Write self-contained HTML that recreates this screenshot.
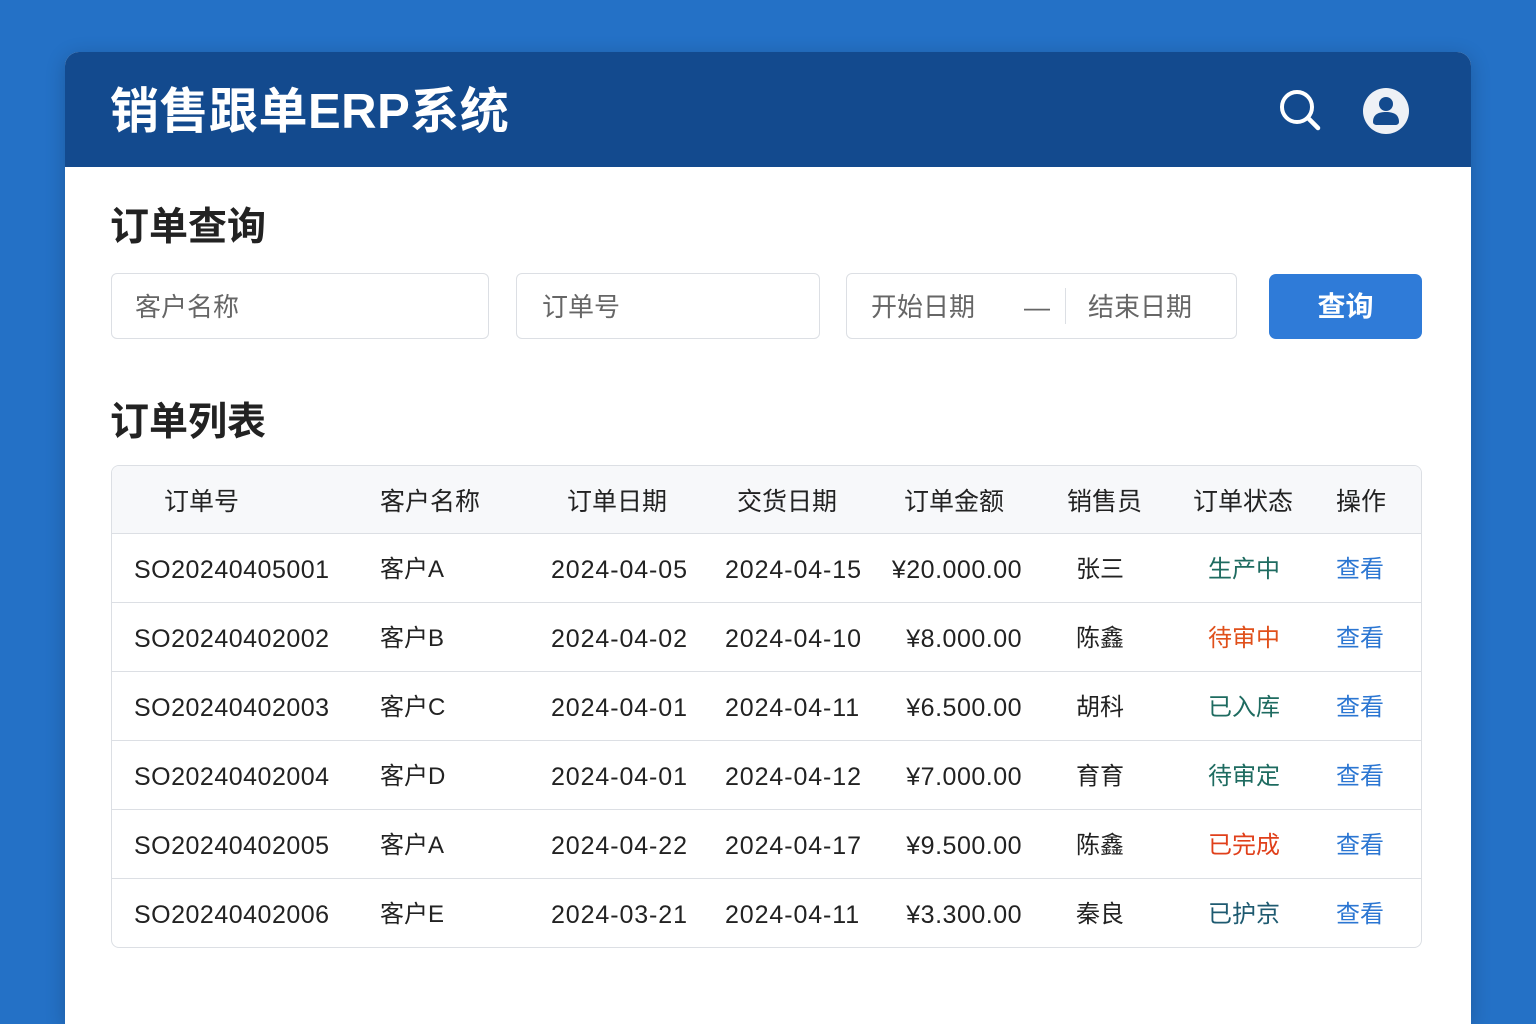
<!DOCTYPE html>
<html><head><meta charset="utf-8"><style>
*{margin:0;padding:0;box-sizing:border-box}
html,body{width:1536px;height:1024px;overflow:hidden}
body{background:#2471c6;font-family:"Liberation Sans","Noto Sans CJK SC",sans-serif;position:relative}
.card{position:absolute;left:65px;top:52px;width:1406px;height:972px;background:#fff;border-radius:14px 14px 0 0;overflow:hidden;box-shadow:0 4px 20px rgba(0,0,0,.2)}
.hd{height:115px;background:#134a8e;position:relative}
.hd h1{position:absolute;left:45px;top:32px;color:#fff;font-size:49px;font-weight:bold;letter-spacing:0.5px;line-height:56px}
.a{position:absolute;white-space:nowrap}
.in{position:absolute;border:1.5px solid #dcdfe4;border-radius:6px;height:66px;top:221px;color:#666;font-size:26px;line-height:66px}
.sec{font-size:39px;font-weight:bold;color:#222;line-height:50px}
.tbl{position:absolute;left:46px;top:413px;width:1311px;height:483px;border:1.5px solid #dcdfe4;border-radius:8px;overflow:hidden}
.th{position:absolute;left:0;top:0;width:100%;height:68px;background:#f7f8fa;border-bottom:1.5px solid #dcdfe4}
.row{position:absolute;left:0;width:100%;height:69px;border-bottom:1.5px solid #dcdfe4}
.c{position:absolute;font-size:24px;color:#222;white-space:nowrap;top:21px;line-height:30px}
.n{font-size:25px;letter-spacing:0.5px}
.d{font-size:25px;letter-spacing:0.9px}
.h{font-size:25px;top:21px}
</style></head><body>
<div class="card">
 <div class="hd"><h1>销售跟单ERP系统</h1>
  <svg class="a" style="left:1213px;top:36px" width="46" height="46" viewBox="0 0 46 46"><circle cx="19" cy="19" r="15" fill="none" stroke="#fff" stroke-width="4"/><line x1="30" y1="30" x2="40" y2="40" stroke="#fff" stroke-width="4.5" stroke-linecap="round"/></svg>
  <svg class="a" style="left:1297px;top:35px" width="48" height="48" viewBox="0 0 48 48"><circle cx="24" cy="24" r="23" fill="#eef1f6"/><circle cx="24" cy="17" r="7" fill="#134a8e"/><path d="M11 35c0-8 6-10 13-10s13 2 13 10c0 2-2 3-4 3H15c-2 0-4-1-4-3z" fill="#134a8e"/></svg>
 </div>
 <div class="a sec" style="left:45px;top:151px">订单查询</div>
 <div class="in" style="left:46px;width:378px;padding-left:23px">客户名称</div>
 <div class="in" style="left:451px;width:304px;padding-left:25px">订单号</div>
 <div class="in" style="left:781px;width:391px">
  <span class="a" style="left:24px">开始日期</span><span class="a" style="left:177px">—</span>
  <span class="a" style="left:218px;top:14px;height:36px;border-left:1.5px solid #dcdfe4"></span>
  <span class="a" style="left:241px">结束日期</span></div>
 <div class="a" style="left:1204px;top:222px;width:153px;height:65px;background:#2f7bd8;border-radius:7px;color:#fff;font-size:28px;font-weight:bold;text-align:center;line-height:65px">查询</div>
 <div class="a sec" style="left:45px;top:346px">订单列表</div>
 <div class="tbl">
  <div class="th">
   <span class="c h" style="left:52px">订单号</span><span class="c h" style="left:268px">客户名称</span><span class="c h" style="left:455px">订单日期</span><span class="c h" style="left:625px">交货日期</span><span class="c h" style="left:792px">订单金额</span><span class="c h" style="left:955px">销售员</span><span class="c h" style="left:1081px">订单状态</span><span class="c h" style="left:1224px">操作</span>
  </div>
  <div class="row" style="top:68px"><span class="c n" style="left:22px">SO20240405001</span><span class="c" style="left:268px">客户A</span><span class="c d" style="left:439px">2024-04-05</span><span class="c d" style="left:613px">2024-04-15</span><span class="c n" style="right:399px">¥20.000.00</span><span class="c" style="left:964px">张三</span><span class="c" style="left:1096px;color:#1e6b60">生产中</span><span class="c" style="left:1224px;color:#2b76d2">查看</span></div>
  <div class="row" style="top:137px"><span class="c n" style="left:22px">SO20240402002</span><span class="c" style="left:268px">客户B</span><span class="c d" style="left:439px">2024-04-02</span><span class="c d" style="left:613px">2024-04-10</span><span class="c n" style="right:399px">¥8.000.00</span><span class="c" style="left:964px">陈鑫</span><span class="c" style="left:1096px;color:#e0501b">待审中</span><span class="c" style="left:1224px;color:#2b76d2">查看</span></div>
  <div class="row" style="top:206px"><span class="c n" style="left:22px">SO20240402003</span><span class="c" style="left:268px">客户C</span><span class="c d" style="left:439px">2024-04-01</span><span class="c d" style="left:613px">2024-04-11</span><span class="c n" style="right:399px">¥6.500.00</span><span class="c" style="left:964px">胡科</span><span class="c" style="left:1096px;color:#1e6b60">已入库</span><span class="c" style="left:1224px;color:#2b76d2">查看</span></div>
  <div class="row" style="top:275px"><span class="c n" style="left:22px">SO20240402004</span><span class="c" style="left:268px">客户D</span><span class="c d" style="left:439px">2024-04-01</span><span class="c d" style="left:613px">2024-04-12</span><span class="c n" style="right:399px">¥7.000.00</span><span class="c" style="left:964px">育育</span><span class="c" style="left:1096px;color:#1e6b60">待审定</span><span class="c" style="left:1224px;color:#2b76d2">查看</span></div>
  <div class="row" style="top:344px"><span class="c n" style="left:22px">SO20240402005</span><span class="c" style="left:268px">客户A</span><span class="c d" style="left:439px">2024-04-22</span><span class="c d" style="left:613px">2024-04-17</span><span class="c n" style="right:399px">¥9.500.00</span><span class="c" style="left:964px">陈鑫</span><span class="c" style="left:1096px;color:#e0401b">已完成</span><span class="c" style="left:1224px;color:#2b76d2">查看</span></div>
  <div class="row" style="top:413px;border-bottom:none"><span class="c n" style="left:22px">SO20240402006</span><span class="c" style="left:268px">客户E</span><span class="c d" style="left:439px">2024-03-21</span><span class="c d" style="left:613px">2024-04-11</span><span class="c n" style="right:399px">¥3.300.00</span><span class="c" style="left:964px">秦良</span><span class="c" style="left:1096px;color:#1e5a70">已护京</span><span class="c" style="left:1224px;color:#2b76d2">查看</span></div>
 </div>
</div>
</body></html>
